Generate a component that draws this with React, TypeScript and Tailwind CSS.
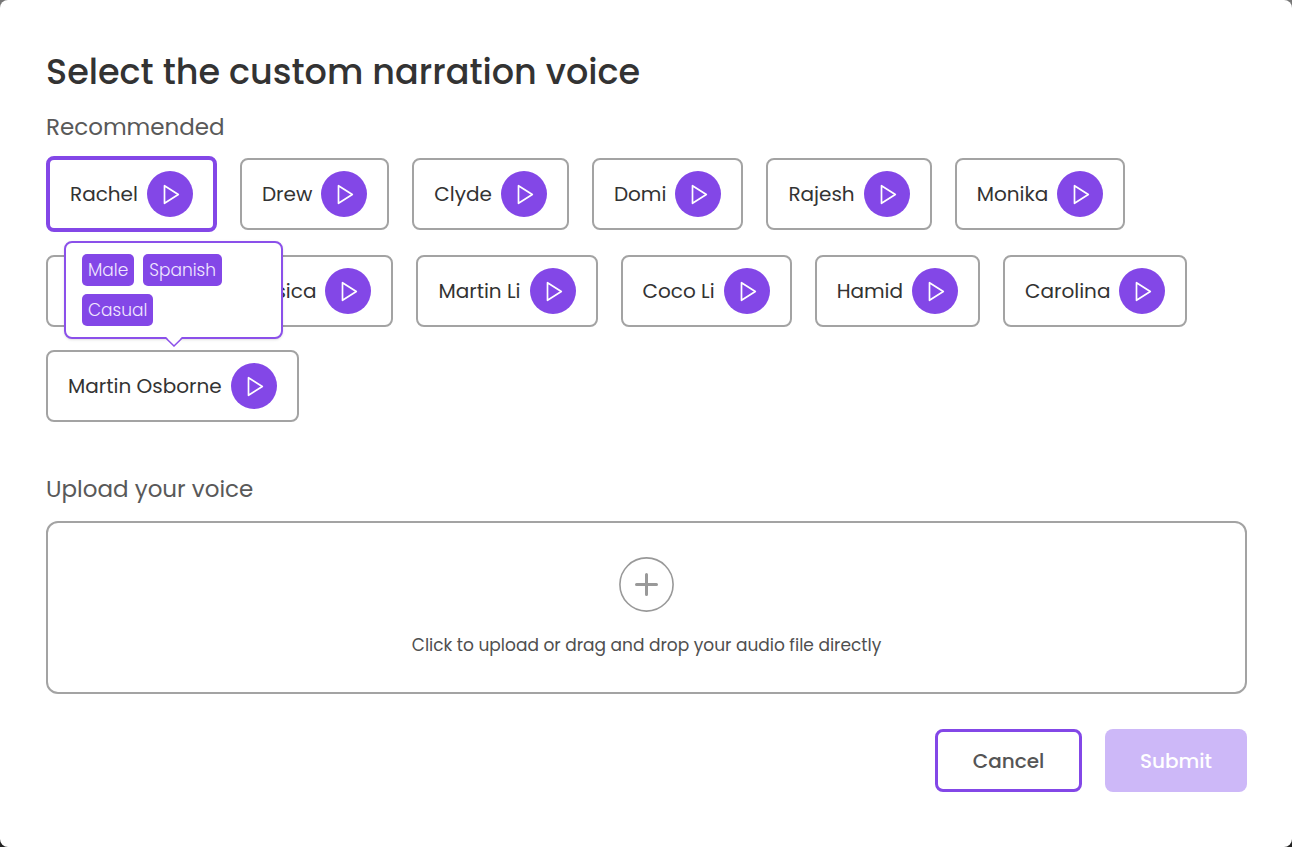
import { useState } from "react";

const voices = [
  "Rachel",
  "Drew",
  "Clyde",
  "Domi",
  "Rajesh",
  "Monika",
  "Emily",
  "Jessica",
  "Martin Li",
  "Coco Li",
  "Hamid",
  "Carolina",
  "Martin Osborne",
];

const tags = ["Male", "Spanish", "Casual"];

function PlayIcon() {
  return (
    <svg width="46" height="46" viewBox="0 0 46 46" fill="none" aria-hidden="true">
      <path d="M17.5 14.7V32.3L31.3 23.5Z" stroke="#fff" strokeWidth="1.7" strokeLinejoin="round" />
    </svg>
  );
}

function VoiceTooltip() {
  return (
    <div
      role="tooltip"
      className="absolute top-full left-3.5 z-10 mt-[13px] w-[219px] rounded-lg border-2 border-[#8b50ea] bg-white px-4 py-[11px] shadow-sm"
    >
      <ul className="flex flex-wrap gap-x-[9px] gap-y-2">
        {tags.map((tag) => (
          <li key={tag} className="rounded-[5px] bg-[#8347e7] px-[6px] text-[17px] leading-8 font-light text-[#f1e8ff]">
            {tag}
          </li>
        ))}
      </ul>
      <svg className="absolute top-full left-1/2 -translate-x-1/2" width="18" height="10" viewBox="0 0 18 10" aria-hidden="true">
        <path d="M1 0H17L9 8.500Z" fill="#fff" />
        <path d="M0.500 0.700L9 9L17.500 0.700" fill="none" stroke="#8b50ea" strokeWidth="1.500" />
      </svg>
    </div>
  );
}

function VoiceCard({ name, selected, onSelect }: { name: string; selected: boolean; onSelect: () => void }) {
  return (
    <li
      className={`relative flex items-center gap-[9px] rounded-lg px-5 ${
        selected ? "h-19 border-4 border-[#8347e7]" : "h-18 border-2 border-[#a3a3a3]"
      }`}
    >
      <button type="button" aria-pressed={selected} onClick={onSelect} className="text-[20px] leading-8 whitespace-nowrap text-[#333]">
        {name}
      </button>
      <button type="button" aria-label={`Play ${name}`} className="size-[46px] shrink-0 rounded-full bg-[#8347e7]">
        <PlayIcon />
      </button>
      {selected && <VoiceTooltip />}
    </li>
  );
}

export default function App() {
  const [selected, setSelected] = useState("Rachel");
  return (
    <div className="flex min-h-screen bg-linear-to-b from-[#777] to-[#222] font-['Poppins','Inter',sans-serif]">
      <main role="dialog" aria-labelledby="title" className="w-full rounded-lg bg-white pt-12 pr-[45px] pb-12 pl-[46px]">
        <h1 id="title" className="text-[35px] leading-12 font-medium text-[#333]">
          Select the custom narration voice
        </h1>
        <h2 className="mt-[13px] text-[23px] leading-9 text-[#595959]">Recommended</h2>
        <ul className="mt-[11px] flex flex-wrap items-center gap-[23px]">
          {voices.map((name) => (
            <VoiceCard key={name} name={name} selected={name === selected} onSelect={() => setSelected(name)} />
          ))}
        </ul>
        <h2 className="mt-[49px] text-[23px] leading-9 text-[#595959]">Upload your voice</h2>
        <label className="mt-3.5 flex h-[173px] cursor-pointer flex-col items-center rounded-xl border-2 border-[#a3a3a3] pt-[34px] text-[17px] leading-7 text-[#4f4f4f]">
          <svg width="55" height="55" viewBox="0 0 55 55" fill="none" stroke="#999" aria-hidden="true">
            <circle cx="27.500" cy="27.500" r="26.600" strokeWidth="1.600" />
            <path d="M27.500 17.500V37.500M17.500 27.500H37.500" strokeWidth="3" strokeLinecap="round" />
          </svg>
          <span className="mt-[19px]">Click to upload or drag and drop your audio file directly</span>
          <input type="file" accept="audio/*" className="sr-only" />
        </label>
        <div className="mt-[35px] flex justify-end gap-[23px] text-[20px] leading-8 font-medium">
          <button type="button" className="h-[63px] w-[147px] rounded-lg border-3 border-[#8347e7] text-[#555]">
            Cancel
          </button>
          <button type="button" disabled className="h-[63px] w-[142px] rounded-lg bg-[#cdb8f8] text-white">
            Submit
          </button>
        </div>
      </main>
    </div>
  );
}
